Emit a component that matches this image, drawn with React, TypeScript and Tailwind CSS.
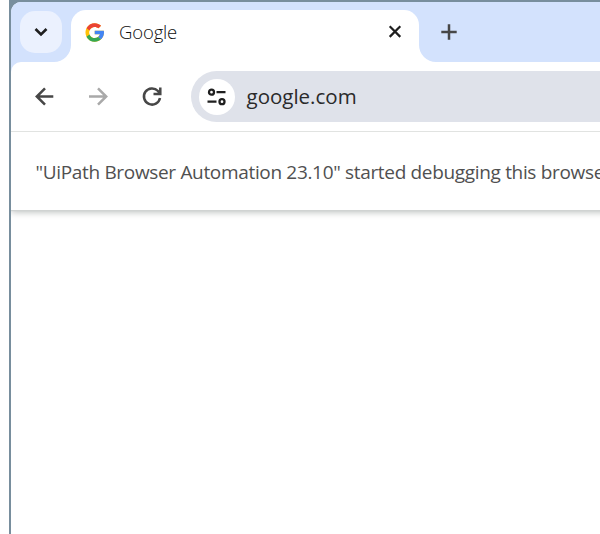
import React from "react";

function GoogleLogo() {
  return (
    <svg className="h-[19px] w-[19px] shrink-0" viewBox="3 3.500 41 41">
      <path fill="#FFC107" d="M43.611 20.083H42V20H24v8h11.303c-1.649 4.657-6.08 8-11.303 8-6.627 0-12-5.373-12-12s5.373-12 12-12c3.059 0 5.842 1.154 7.961 3.039l5.657-5.657C34.046 6.053 29.268 4 24 4 12.955 4 4 12.955 4 24s8.955 20 20 20 20-8.955 20-20c0-1.341-.138-2.65-.389-3.917z" />
      <path fill="#EA4335" d="m6.306 14.691 6.571 4.819C14.655 15.108 18.961 12 24 12c3.059 0 5.842 1.154 7.961 3.039l5.657-5.657C34.046 6.053 29.268 4 24 4 16.318 4 9.656 8.337 6.306 14.691z" />
      <path fill="#34A853" d="M24 44c5.166 0 9.86-1.977 13.409-5.192l-6.19-5.238A11.91 11.91 0 0 1 24 36c-5.202 0-9.619-3.317-11.283-7.946l-6.522 5.025C9.505 39.556 16.227 44 24 44z" />
      <path fill="#4285F4" d="M43.611 20.083H42V20H24v8h11.303a12.04 12.04 0 0 1-4.087 5.571l6.193 5.238C36.971 39.205 44 34 44 24c0-1.341-.138-2.65-.389-3.917z" />
    </svg>
  );
}

function TabStrip() {
  return (
    <div className="flex h-[60px] shrink-0 items-end rounded-tl-[10px] bg-[#d3e2fd] pl-[9px]">
      <button className="mb-[9px] flex h-[42px] w-[42px] shrink-0 items-center justify-center rounded-[15px] bg-[#ebf1fe]">
        <svg className="h-4 w-4" viewBox="0 0 16 16" fill="none" stroke="#1f1f1f" strokeWidth="2.6">
          <path d="M2.500 5 8 10.500 13.500 5" />
        </svg>
      </button>
      <div className="relative ml-[9px] flex h-[52px] w-[348px] shrink-0 items-center rounded-t-[15px] bg-white pr-[17px] pb-2 pl-[14px]">
        <svg className="absolute bottom-0 -left-[17px] h-[17px] w-[17px]" viewBox="0 0 17 17">
          <path fill="#fff" d="M17 0v17H0A17 17 0 0 0 17 0z" />
        </svg>
        <svg className="absolute -right-[17px] bottom-0 h-[17px] w-[17px]" viewBox="0 0 17 17">
          <path fill="#fff" d="M0 0v17h17A17 17 0 0 1 0 0z" />
        </svg>
        <GoogleLogo />
        <span className="ml-[15px] flex-1 text-[18.500px] leading-6 font-light tracking-[-0.15px] text-[#0f0f0f]">Google</span>
        <svg className="h-[14px] w-[14px]" viewBox="0 0 14 14" fill="none" stroke="#1f1f1f" strokeWidth="2.2">
          <path d="m1.700 1.300 10.600 10.600M12.300 1.300 1.700 11.900" />
        </svg>
      </div>
      <svg className="mb-[22px] ml-[22px] h-4 w-4 shrink-0" viewBox="0 0 16 16" fill="none" stroke="#474747" strokeWidth="2.5">
        <path d="M8 .3v15.400M.3 8h15.400" />
      </svg>
    </div>
  );
}

function Toolbar() {
  return (
    <div className="flex h-[70px] shrink-0 items-center rounded-tl-[10px] border-b border-[#e1e3e1] bg-white pl-[22px]">
      <svg className="h-6 w-6 shrink-0" viewBox="0 0 24 24" fill="none" stroke="#474747" strokeWidth="2.5">
        <path d="M20.300 11.500H4M12 3.300l-8.200 8.200 8.200 8.200" />
      </svg>
      <svg className="ml-[29px] h-6 w-6 shrink-0" viewBox="0 0 24 24" fill="none" stroke="#a9a9a9" strokeWidth="2.5">
        <path d="M3 11.500h17M12 3.300l8.200 8.200-8.200 8.200" />
      </svg>
      <svg className="ml-[30px] h-6 w-6 shrink-0" viewBox="0 0 24 24" fill="none" stroke="#474747" strokeWidth="2.5">
        <path d="M20 13A8.100 8.100 0 1 1 18 6l2 2.500M20.300 2.500v6.600H13.500" />
      </svg>
      <div className="ml-[27px] flex h-[51px] flex-1 items-center rounded-l-full bg-[#dfe2ea] pl-[7.500px]">
        <span className="flex h-9 w-9 shrink-0 items-center justify-center rounded-full bg-white">
          <svg className="h-5 w-5" viewBox="0.500 0 20 20" fill="none" stroke="#1f1f1f" strokeWidth="2.300">
            <circle cx="5" cy="5.200" r="2.500" />
            <path d="M10 5.200h9M1 14.700h9" />
            <circle cx="15.500" cy="14.700" r="2.500" />
          </svg>
        </span>
        <span className="ml-3 pb-px text-[20.500px] leading-7 text-[#2a2a2a]">google.com</span>
      </div>
    </div>
  );
}

export default function App() {
  return (
    <div className="h-[534px] w-[600px] overflow-hidden bg-white pl-[9px] font-['Open_Sans','Noto_Sans',sans-serif]">
      <div className="flex h-full flex-col bg-[#788e9d] pt-[2px] pl-[2px]">
        <div className="flex flex-1 flex-col overflow-hidden rounded-tl-[10px] bg-white">
          <div className="relative z-10 flex flex-col bg-[#d3e2fd]">
            <TabStrip />
            <Toolbar />
          </div>
          <div className="-mr-4 flex h-[78px] shrink-0 items-center bg-white pt-0.5 pl-[24.500px] shadow-[0_1px_1px_#d0d3d2,0_2px_7px_#b8bbba]">
            <span className="text-[19px] leading-7 tracking-[-0.33px] whitespace-nowrap text-[#505050]">
              "UiPath Browser Automation 23.10" started debugging this browser
            </span>
          </div>
          <main className="flex-1" />
        </div>
      </div>
    </div>
  );
}
